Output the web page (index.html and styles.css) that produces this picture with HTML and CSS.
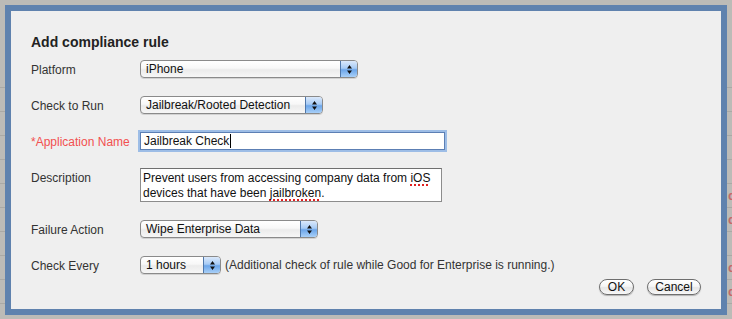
FILE: index.html
```html
<!DOCTYPE html>
<html>
<head>
<meta charset="utf-8">
<title>Add compliance rule</title>
<link rel="stylesheet" href="styles.css">
</head>
<body>
<div class="page">
  <div class="bg-row"></div>
  <div class="bg-row"></div>
  <div class="bg-row"></div>
  <div class="bg-row"></div>
  <div class="bg-row"><span class="bg-link">d</span></div>
  <div class="bg-row"><span class="bg-link">d</span></div>
  <div class="bg-row"></div>
  <div class="bg-row"><span class="bg-link">d</span></div>
  <div class="bg-row"><span class="bg-link">d</span></div>
  <div class="bg-row bg-last"><span class="bg-text">Jailbroken Device Compliance Rule</span></div>
</div>

<div class="dialog">
  <h1 class="title">Add compliance rule</h1>
  <div class="form">
    <div class="label">Platform</div>
    <div class="ctl">
      <div class="popup w-platform"><span class="popup-text">iPhone</span><span class="stepper"><svg width="7" height="11" viewBox="0 0 7 11"><path d="M3.5 1 L6 4.5 H1 Z M3.5 10 L6 6.5 H1 Z" fill="#111"/></svg></span></div>
    </div>

    <div class="label">Check to Run</div>
    <div class="ctl">
      <div class="popup w-check"><span class="popup-text">Jailbreak/Rooted Detection</span><span class="stepper"><svg width="7" height="11" viewBox="0 0 7 11"><path d="M3.5 1 L6 4.5 H1 Z M3.5 10 L6 6.5 H1 Z" fill="#111"/></svg></span></div>
    </div>

    <div class="label required">*Application Name</div>
    <div class="ctl">
      <div class="textfield">Jailbreak Check<span class="caret"></span></div>
    </div>

    <div class="label">Description</div>
    <div class="ctl">
      <div class="textarea">Prevent users from accessing company data from <span class="misspelled">iOS</span><br>devices that have been <span class="misspelled">jailbroken</span>.</div>
    </div>

    <div class="label">Failure Action</div>
    <div class="ctl">
      <div class="popup w-failure"><span class="popup-text">Wipe Enterprise Data</span><span class="stepper"><svg width="7" height="11" viewBox="0 0 7 11"><path d="M3.5 1 L6 4.5 H1 Z M3.5 10 L6 6.5 H1 Z" fill="#111"/></svg></span></div>
    </div>

    <div class="label">Check Every</div>
    <div class="ctl ctl-inline">
      <div class="popup w-every"><span class="popup-text">1 hours</span><span class="stepper"><svg width="7" height="11" viewBox="0 0 7 11"><path d="M3.5 1 L6 4.5 H1 Z M3.5 10 L6 6.5 H1 Z" fill="#111"/></svg></span></div>
      <span class="note">(Additional check of rule while Good for Enterprise is running.)</span>
    </div>
  </div>
  <div class="actions">
    <button class="btn btn-ok">OK</button>
    <button class="btn btn-cancel">Cancel</button>
  </div>
</div>
</body>
</html>
```

FILE: styles.css
```css
html, body {
  margin: 0;
  padding: 0;
}

body {
  width: 732px;
  height: 319px;
  overflow: hidden;
  position: relative;
  background: #bcbbb7;
  font-family: "Liberation Sans", Arial, sans-serif;
  font-size: 12px;
  color: #333;
}

/* background page (covered by the dialog) */
.page {
  padding-top: 87px;
}

.bg-row {
  height: 24px;
  border-top: 1px solid #aaa9a5;
  box-sizing: border-box;
  display: flex;
  align-items: center;
}

.bg-link {
  margin-left: 728px;
  color: #c46a6a;
  font-weight: bold;
  font-size: 13px;
  white-space: nowrap;
}

.bg-last {
  align-items: flex-start;
}

.bg-text {
  margin-top: 12px;
  margin-left: 42px;
  color: #6d6c69;
  font-weight: bold;
  font-size: 13px;
  line-height: 16px;
  white-space: nowrap;
}

/* dialog */
.dialog {
  position: absolute;
  left: 5px;
  top: 5px;
  width: 722px;
  height: 310px;
  box-sizing: border-box;
  border: 6px solid #5f82ae;
  background: #efefef;
  padding: 23px 20px 0 20px;
}

.title {
  margin: 0;
  font-size: 14px;
  line-height: 16px;
  font-weight: bold;
  color: #222;
}

.form {
  margin-top: 10px;
  display: grid;
  grid-template-columns: 109px 1fr;
  row-gap: 18px;
}

.label {
  padding-top: 3px;
  line-height: 14px;
  color: #333;
  white-space: nowrap;
}

.label.required {
  color: #f25050;
}

.ctl {
  display: flex;
  align-items: center;
}

.ctl-inline {
  gap: 4px;
}

.note {
  color: #333;
  white-space: nowrap;
  line-height: 14px;
}

/* popup select */
.popup {
  height: 18px;
  box-sizing: border-box;
  border: 1px solid #8a8a8a;
  border-radius: 4px;
  display: flex;
  background: linear-gradient(#ffffff, #f7f7f7 45%, #ebebeb 55%, #f6f6f6);
  box-shadow: 0 1px 0 rgba(0, 0, 0, 0.12);
  overflow: hidden;
}

.popup-text {
  flex: 1;
  padding-left: 5px;
  line-height: 16px;
  color: #111;
  white-space: nowrap;
}

.stepper {
  width: 16px;
  border-left: 1px solid #4f77aa;
  background: linear-gradient(#dbe9fb, #a7cbf5 45%, #6ca6ea 55%, #a9d0f8);
  display: flex;
  align-items: center;
  justify-content: center;
}

.w-platform { width: 218px; }
.w-check { width: 183px; }
.w-failure { width: 178px; }
.w-every { width: 81px; }

/* text field */
.textfield {
  width: 305px;
  height: 18px;
  box-sizing: border-box;
  border: 1px solid #5c7fb4;
  background: #fff;
  box-shadow: 0 0 0 2px #9dbde6;
  padding-left: 3px;
  line-height: 16px;
  color: #111;
  display: flex;
  align-items: center;
}

.caret {
  display: inline-block;
  width: 1px;
  height: 14px;
  background: #000;
  margin-left: 1px;
}

/* textarea */
.textarea {
  width: 302px;
  height: 34px;
  box-sizing: border-box;
  border: 1px solid #8c8c8c;
  border-top-color: #6f6f6f;
  background: #fff;
  padding: 2px 1px 0 2px;
  line-height: 15px;
  color: #111;
  white-space: nowrap;
}

.misspelled {
  text-decoration: underline dotted #e02020;
  text-decoration-thickness: 2px;
  text-underline-offset: 2px;
}

/* buttons */
.actions {
  margin-top: 5px;
  display: flex;
  justify-content: flex-end;
  gap: 13px;
}

.btn {
  height: 16px;
  box-sizing: border-box;
  padding: 0;
  border: 1px solid #6e6e6e;
  border-radius: 8px;
  background: linear-gradient(#ffffff, #f6f6f6 45%, #e6e6e6 55%, #f8f8f8);
  box-shadow: 0 1px 1px rgba(0, 0, 0, 0.25);
  font-family: "Liberation Sans", Arial, sans-serif;
  font-size: 12px;
  line-height: 14px;
  color: #111;
}

.btn-ok { width: 35px; }
.btn-cancel { width: 54px; }
```
